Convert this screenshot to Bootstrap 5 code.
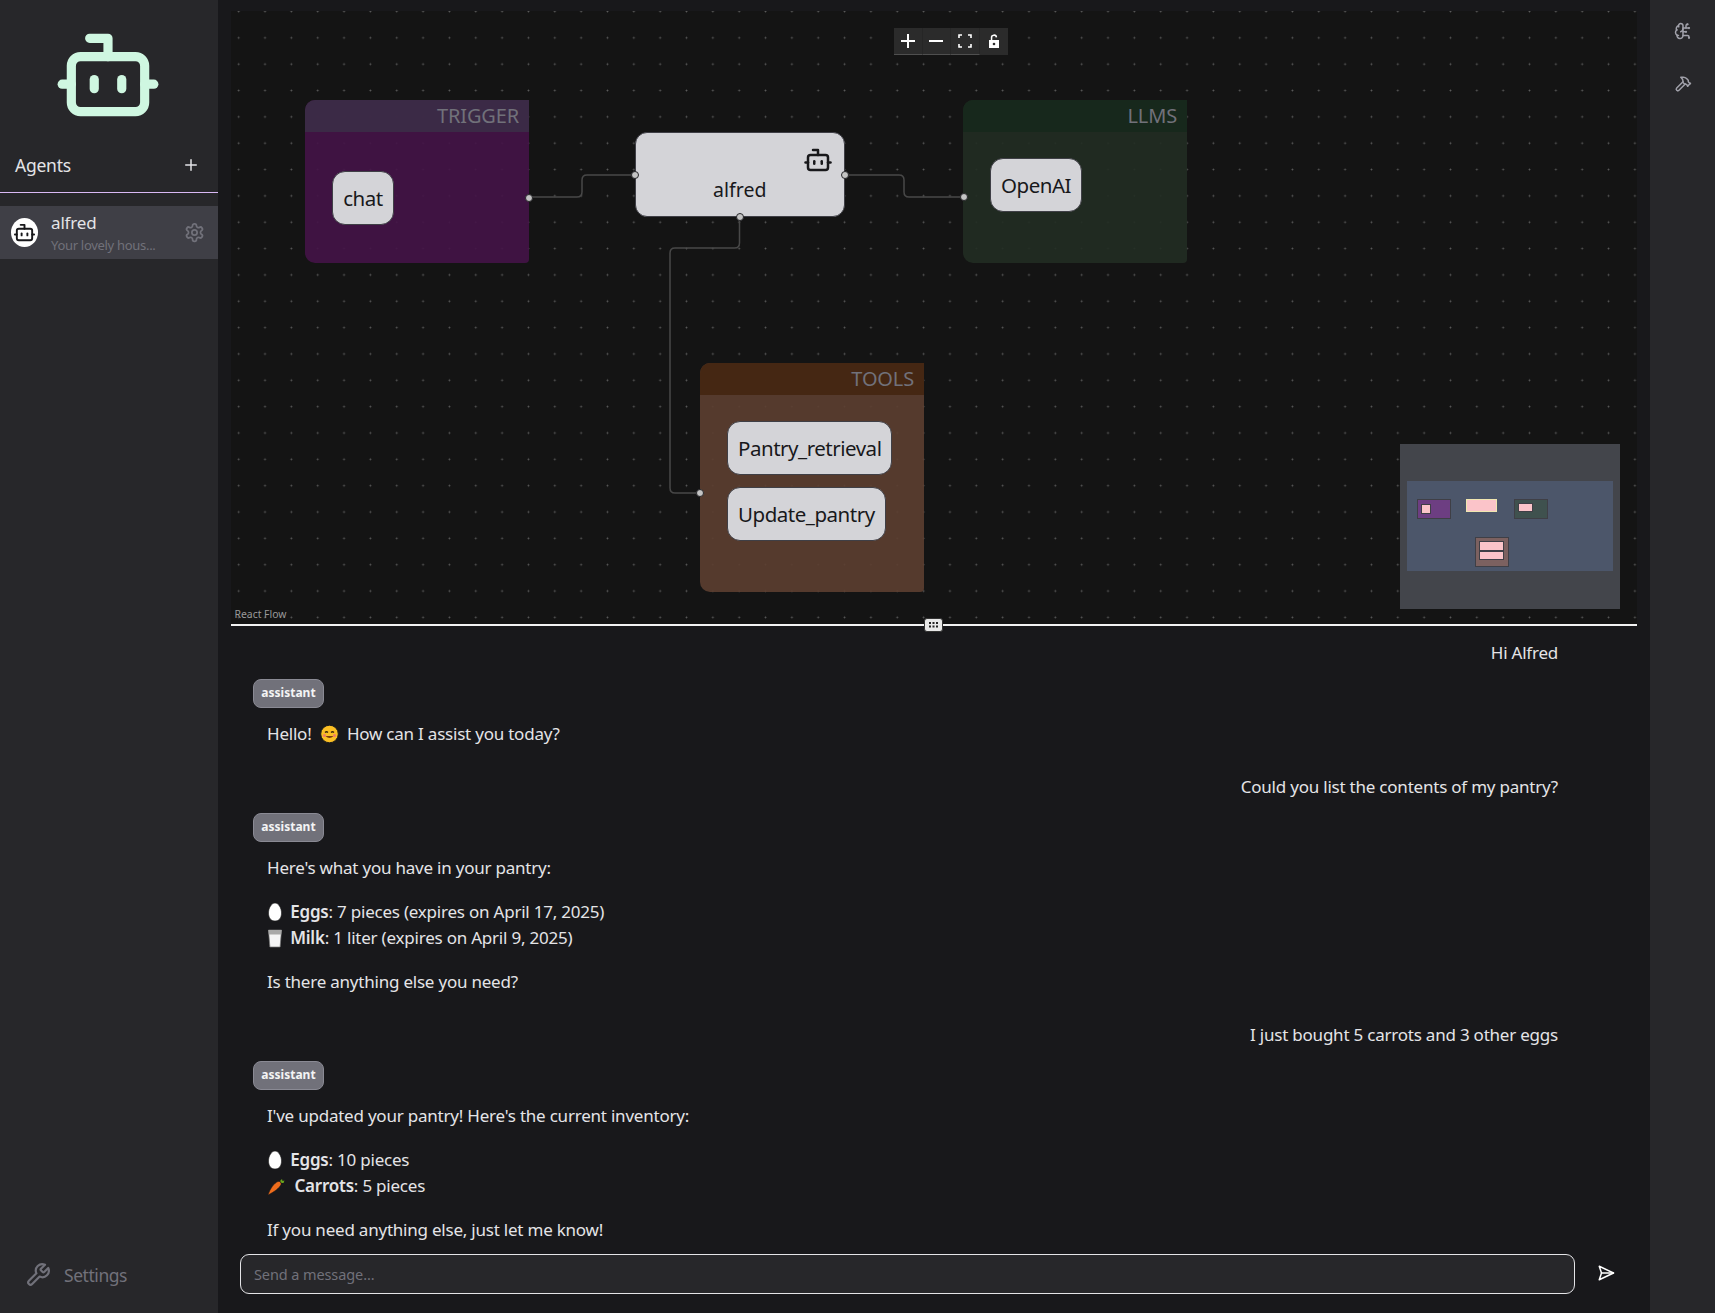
<!DOCTYPE html>
<html lang="en" data-bs-theme="dark">
<head>
<meta charset="utf-8">
<title>Agents</title>
<link href="https://cdn.jsdelivr.net/npm/bootstrap@5.3.0/dist/css/bootstrap.min.css" rel="stylesheet">
<style>
html,body{height:100%;margin:0}
body{background:#18181b;color:#e4e4e7;font-family:"Noto Sans","Open Sans",sans-serif;font-size:17px;line-height:26px;overflow:hidden}
svg.ic{fill:none;stroke:currentColor;stroke-width:2;stroke-linecap:round;stroke-linejoin:round;flex:none;display:block}
.app-shell{height:1313px;width:1715px}
.side-pane{width:218px;background:#27272a;flex:none}
.logo-wrap{height:129px;padding-top:20px;padding-left:53px;color:#cff7e1}
.agents-head{height:64px;padding:23px 18px 0 15px;border-bottom:1px solid #d9b9f5;margin-bottom:13px;font-size:17.5px;letter-spacing:-.25px}
.agent-item{height:53px;background:#3f3f46;padding-left:11px}
.agent-avatar{width:27px;height:29px;border-radius:50%;background:#fff;color:#18181b}
.agent-text{margin-left:13px;line-height:1;padding-top:1px}
.agent-name{font-size:17px;line-height:22px;color:#e4e4e7;letter-spacing:-.15px}
.agent-sub{font-size:13px;line-height:18px;color:#71717a;margin-top:2px;letter-spacing:-.3px}
.gear-ic{color:#71717a;margin-left:auto;margin-right:13px}
.settings-row{padding:0 0 25px 25px;color:#71717a;font-size:17.5px;gap:13px;letter-spacing:-.45px}
.main-pane{min-width:0;padding:11px 13px 0}
.flow-area{height:613px;background-color:#141414;background-image:radial-gradient(circle at center,#5c5c5c .8px,transparent 1.1px);background-size:26.35px 26.35px;background-position:-5.5px -12.7px;position:relative;overflow:hidden;flex:none}
.edge-layer{position:absolute;left:0;top:0;width:1406px;height:613px;fill:none;stroke:#484848;stroke-width:1.5}
.flow-ctrl{position:absolute;left:663px;top:17px;background:#2b2b2b;display:flex}
.ctrl-btn{width:28.5px;height:27px;display:flex;align-items:center;justify-content:center;color:#fff;border-bottom:1px solid #4f4f4f;border-right:1px solid #262626}
.ctrl-btn.last-btn{border-bottom-color:transparent;border-right:0}
.group-box{position:absolute;width:224px;border-radius:10px 0 4px 10px}
.g-trigger{left:74px;top:89px;height:163px;background:rgba(68,19,71,.9)}
.g-llm{left:732px;top:89px;height:163px;background:rgba(33,44,34,.9)}
.g-tools{left:469px;top:352px;height:229px;background:rgba(92,62,48,.9)}
.group-title{height:32px;text-align:right;padding-right:10px;font-size:20px;line-height:32px;color:#71717a;border-radius:10px 0 0 0;letter-spacing:-.15px}
.g-trigger .group-title{background:rgba(60,44,70,.94)}
.g-llm .group-title{background:rgba(22,40,28,.94)}
.g-tools .group-title{background:rgba(68,38,18,.94)}
.group-body{padding-left:27px;gap:12px}
.flow-node{background:#d4d4d8;color:#18181b;border:1px solid #3f3f46;border-radius:13px;height:54px;line-height:52px;padding:0 10px;font-size:20.5px;width:max-content;min-width:62px;text-align:center;letter-spacing:-.48px}
.g-trigger .group-body{padding-top:39px}
.g-llm .group-body{padding-top:26px}
.g-tools .group-body{padding-top:26px}
.agent-node{position:absolute;left:404px;top:121px;width:209.500px;height:85px;background:#d4d4d8;color:#18181b;border:1px solid #3f3f46;border-radius:12px;text-align:center;font-size:19.5px;padding-top:44px;line-height:26px}
.agent-node svg{position:absolute;right:11px;top:12px}
.flow-handle{position:absolute;width:8px;height:8px;border-radius:50%;background:#c4c4c4;border:1px solid #27272a}
.h-a{left:293.500px;top:182.500px}.h-b{left:399.500px;top:160px}.h-c{left:609.500px;top:160px}.h-d{left:504.500px;top:202px}.h-e{left:728.500px;top:182px}.h-f{left:465px;top:478px}
.mini-map{position:absolute;left:1169px;top:433px;width:220px;height:165px;background:#43454b}
.flow-credit{position:absolute;left:3.500px;top:596px;font-size:10.4px;line-height:14px;color:#9a9a9a}
.split-line{height:2px;background:#f2f2f2;position:relative;flex:none}
.split-grip{position:absolute;left:693px;top:-6px;width:19px;height:14px;background:#e8e8e8;border-radius:3px;display:flex;align-items:center;justify-content:center;border:1px solid #333}
.chat-scroll{flex:1;min-height:0;overflow:hidden;padding:14px 79px 0 22px;letter-spacing:-.22px}
.user-msg{text-align:right;margin-bottom:13px}
.role-tag{display:inline-block;height:29px;width:71px;background:#71717a;border:1px solid #8a8a94;border-radius:8px;font-size:12px;font-weight:700;color:#f4f4f5;line-height:25px;text-align:center;vertical-align:top;letter-spacing:0}
.role-wrap{height:29px;margin-bottom:13px}
.msg-body{padding-left:14px}
.msg-body p{margin:0 0 18px}
.msg-body p.last-p{margin-bottom:27px}
.msg-body ul{list-style:none;padding:0;margin:0 0 18px}
.msg-body strong{font-weight:600}
.emo{display:inline-block;vertical-align:-4px;width:19px;height:20px}
.emo-face{margin:0 4px}
.input-row{height:59px;flex:none;padding:0 0 0 9px;margin-top:10px}
.msg-input{height:40px;width:1335px;background:#27272a;border:1px solid #e4e4e7;border-radius:9px;color:#71717a;font-size:14.5px;padding:0 13px;display:flex;align-items:center;letter-spacing:-.1px}
.send-ic{margin-left:22px;color:#fff;margin-top:10px}
.right-pane{width:65px;background:#27272a;flex:none;color:#a1a1aa;padding-top:22px;gap:35px}
</style>
</head>
<body>
<div class="app-shell d-flex">
  <aside class="side-pane d-flex flex-column">
    <div class="logo-wrap">
      <svg class="ic" width="110" height="110" viewBox="0 0 24 24"><path d="M12 8V4H8"/><rect width="16" height="12" x="4" y="8" rx="2"/><path d="M2 14h2"/><path d="M20 14h2"/><path d="M15 13v2"/><path d="M9 13v2"/></svg>
    </div>
    <div class="agents-head d-flex justify-content-between align-items-start">
      <span>Agents</span>
      <svg class="ic mt-1" width="18" height="18" viewBox="0 0 24 24" stroke-width="1.6"><path d="M5 12h14"/><path d="M12 5v14"/></svg>
    </div>
    <div class="agent-item d-flex align-items-center">
      <div class="agent-avatar d-flex align-items-center justify-content-center">
        <svg class="ic" width="23" height="23" viewBox="0 0 24 24"><path d="M12 8V4H8"/><rect width="16" height="12" x="4" y="8" rx="2"/><path d="M2 14h2"/><path d="M20 14h2"/><path d="M15 13v2"/><path d="M9 13v2"/></svg>
      </div>
      <div class="agent-text">
        <div class="agent-name">alfred</div>
        <div class="agent-sub">Your lovely hous...</div>
      </div>
      <svg class="ic gear-ic" width="21" height="21" viewBox="0 0 24 24" stroke-width="1.6"><path d="M12.22 2h-.44a2 2 0 0 0-2 2v.18a2 2 0 0 1-1 1.73l-.43.25a2 2 0 0 1-2 0l-.15-.08a2 2 0 0 0-2.73.73l-.22.38a2 2 0 0 0 .73 2.73l.15.1a2 2 0 0 1 1 1.72v.51a2 2 0 0 1-1 1.74l-.15.09a2 2 0 0 0-.73 2.73l.22.38a2 2 0 0 0 2.73.73l.15-.08a2 2 0 0 1 2 0l.43.25a2 2 0 0 1 1 1.73V20a2 2 0 0 0 2 2h.44a2 2 0 0 0 2-2v-.18a2 2 0 0 1 1-1.73l.43-.25a2 2 0 0 1 2 0l.15.08a2 2 0 0 0 2.73-.73l.22-.39a2 2 0 0 0-.73-2.73l-.15-.08a2 2 0 0 1-1-1.74v-.5a2 2 0 0 1 1-1.74l.15-.09a2 2 0 0 0 .73-2.73l-.22-.38a2 2 0 0 0-2.73-.73l-.15.08a2 2 0 0 1-2 0l-.43-.25a2 2 0 0 1-1-1.73V4a2 2 0 0 0-2-2z"/><circle cx="12" cy="12" r="3"/></svg>
    </div>
    <div class="settings-row d-flex align-items-center mt-auto">
      <svg class="ic" width="26" height="26" viewBox="0 0 24 24"><path d="M14.7 6.3a1 1 0 0 0 0 1.4l1.6 1.6a1 1 0 0 0 1.4 0l3.77-3.77a6 6 0 0 1-7.94 7.94l-6.91 6.91a2.12 2.12 0 0 1-3-3l6.91-6.91a6 6 0 0 1 7.94-7.94l-3.76 3.76z"/></svg>
      <span>Settings</span>
    </div>
  </aside>

  <main class="main-pane flex-grow-1 d-flex flex-column">
    <section class="flow-area">
      <svg class="edge-layer" viewBox="0 0 1406 613">
        <path d="M298 186H346Q351 186 351 181V169Q351 164 356 164H404"/>
        <path d="M613 164H668Q673 164 673 169V181Q673 186 678 186H733"/>
        <path d="M508.500 206V232Q508.500 237 503.500 237H444Q439 237 439 242V477Q439 482 444 482H469"/>
      </svg>
      <div class="flow-ctrl">
        <div class="ctrl-btn"><svg width="14" height="14" viewBox="0 0 14 14" fill="#fff"><path d="M6 0h2v6h6v2H8v6H6V8H0V6h6z"/></svg></div>
        <div class="ctrl-btn"><svg width="14" height="14" viewBox="0 0 14 14" fill="#fff"><path d="M0 6h14v2H0z"/></svg></div>
        <div class="ctrl-btn"><svg width="14" height="14" viewBox="0 0 14 14" fill="none" stroke="#fff" stroke-width="1.6"><path d="M1 4V1h3M10 1h3v3M13 10v3h-3M4 13H1v-3"/></svg></div>
        <div class="ctrl-btn last-btn"><svg width="12" height="14" viewBox="0 0 12 14" fill="#fff"><path d="M1 6h10v8H1zM2.800 6V4a3.200 3.200 0 0 1 6.400-.8l-1.500.3A1.700 1.700 0 0 0 4.300 4v2z"/><circle cx="6" cy="10" r="1.300" fill="#2b2b2b"/></svg></div>
      </div>

      <div class="group-box g-trigger">
        <div class="group-title">TRIGGER</div>
        <div class="group-body d-flex flex-column"><div class="flow-node">chat</div></div>
      </div>
      <div class="group-box g-llm">
        <div class="group-title">LLMS</div>
        <div class="group-body d-flex flex-column"><div class="flow-node">OpenAI</div></div>
      </div>
      <div class="group-box g-tools">
        <div class="group-title">TOOLS</div>
        <div class="group-body d-flex flex-column">
          <div class="flow-node">Pantry_retrieval</div>
          <div class="flow-node">Update_pantry</div>
        </div>
      </div>
      <div class="agent-node">
        <svg class="ic" width="30" height="30" viewBox="0 0 24 24"><path d="M12 8V4H8"/><rect width="16" height="12" x="4" y="8" rx="2"/><path d="M2 14h2"/><path d="M20 14h2"/><path d="M15 13v2"/><path d="M9 13v2"/></svg>
        alfred
      </div>
      <span class="flow-handle h-a"></span><span class="flow-handle h-b"></span><span class="flow-handle h-c"></span><span class="flow-handle h-d"></span><span class="flow-handle h-e"></span><span class="flow-handle h-f"></span>

      <svg class="mini-map" viewBox="0 0 220 165">
        <rect x="7" y="37" width="206" height="90" fill="#4c566a"/>
        <g stroke="#3f3f46" stroke-width="1">
          <rect x="17.500" y="55.500" width="33" height="19" fill="#6d3e82"/>
          <rect x="21.500" y="60.500" width="9" height="9" fill="#fbc4c9"/>
          <rect x="114.500" y="55.500" width="33" height="19" fill="#3f514e"/>
          <rect x="118.500" y="59.500" width="14" height="8" fill="#fbc4c9"/>
          <rect x="75.500" y="93.500" width="33" height="29" fill="#7c6160"/>
          <rect x="79.500" y="97.500" width="24" height="9" fill="#fbc4c9"/>
          <rect x="79.500" y="107.500" width="24" height="8" fill="#fbc4c9"/>
        </g>
        <rect x="66.500" y="55.500" width="30" height="12" fill="#fbc4c9" stroke="#f0e6b0"/>
      </svg>
      <div class="flow-credit">React Flow</div>
    </section>
    <div class="split-line">
      <div class="split-grip"><svg width="9" height="7" viewBox="0 0 9 7" fill="#222"><path d="M0 0h2v2H0zM3.500 0h2v2h-2zM7 0h2v2H7zM0 3.500h2v2H0zM3.500 3.500h2v2h-2zM7 3.500h2v2H7z"/></svg></div>
    </div>
    <div class="chat-scroll">
      <div class="user-msg">Hi Alfred</div>
      <div class="role-wrap"><span class="role-tag">assistant</span></div>
      <div class="msg-body">
        <p class="last-p">Hello! <svg class="emo emo-face" viewBox="0 0 19 20"><circle cx="9.500" cy="10" r="8.800" fill="#fbbf24" stroke="#1a1a1a"/><path d="M5 8.500q1.500-1.500 3 0M11 8.500q1.500-1.500 3 0" fill="none" stroke="#3a2410" stroke-width="1.200"/><path d="M5.500 12q4 4 8 0z" fill="#7a3b10"/><circle cx="4.500" cy="11.500" r="1.500" fill="#f27a6a"/><circle cx="14.500" cy="11.500" r="1.500" fill="#f27a6a"/></svg> How can I assist you today?</p>
      </div>
      <div class="user-msg">Could you list the contents of my pantry?</div>
      <div class="role-wrap"><span class="role-tag">assistant</span></div>
      <div class="msg-body">
        <p>Here's what you have in your pantry:</p>
        <ul>
          <li><svg class="emo" viewBox="0 0 19 20"><path d="M8 1c3.500 0 6.500 5 6.500 10S12 19 8 19s-6.500-3-6.500-8S4.500 1 8 1z" fill="#fff" stroke="#1a1a1a" stroke-width=".6"/></svg> <strong>Eggs</strong>: 7 pieces (expires on April 17, 2025)</li>
          <li><svg class="emo" viewBox="0 0 19 20"><path d="M1.500 2h13l-1.400 17H2.900z" fill="#f4f4f5" stroke="#777" stroke-width=".7"/><path d="M1.500 2h13l-.4 4.500H1.900z" fill="#a8a8a8"/></svg> <strong>Milk</strong>: 1 liter (expires on April 9, 2025)</li>
        </ul>
        <p class="last-p">Is there anything else you need?</p>
      </div>
      <div class="user-msg">I just bought 5 carrots and 3 other eggs</div>
      <div class="role-wrap"><span class="role-tag">assistant</span></div>
      <div class="msg-body">
        <p>I've updated your pantry! Here's the current inventory:</p>
        <ul>
          <li><svg class="emo" viewBox="0 0 19 20"><path d="M8 1c3.500 0 6.500 5 6.500 10S12 19 8 19s-6.500-3-6.500-8S4.500 1 8 1z" fill="#fff" stroke="#1a1a1a" stroke-width=".6"/></svg> <strong>Eggs</strong>: 10 pieces</li>
          <li><svg class="emo" viewBox="0 0 19 20"><path d="M13 5 15 3l.5 2 2-.5-1 2.500-2 0z" fill="#6aa51c"/><path d="M1 19C3 13 7 7 11 5.500c2-.5 3.500 1 3 3C12.500 12 7 16 1 19z" fill="#ee6c1c" stroke="#1a1a1a" stroke-width=".5"/></svg> &nbsp;<strong>Carrots</strong>: 5 pieces</li>
        </ul>
        <p class="mb-0">If you need anything else, just let me know!</p>
      </div>
    </div>
    <div class="input-row d-flex align-items-start">
      <div class="msg-input">Send a message...</div>
      <svg class="ic send-ic" width="18" height="18" viewBox="0 0 24 24"><path d="m3 3 3 9-3 9 19-9Z"/><path d="M6 12h16"/></svg>
    </div>
  </main>

  <aside class="right-pane d-flex flex-column align-items-center">
    <svg class="ic" width="18" height="18" viewBox="0 0 24 24"><path d="M12 5a3 3 0 1 0-5.997.125 4 4 0 0 0-2.526 5.77 4 4 0 0 0 .556 6.588A4 4 0 1 0 12 18Z"/><path d="M9 13a4.500 4.500 0 0 0 3-4"/><path d="M6.003 5.125A3 3 0 0 0 6.401 6.500"/><path d="M3.477 10.896a4 4 0 0 1 .585-.396"/><path d="M6 18a4 4 0 0 1-1.967-.516"/><path d="M12 13h4"/><path d="M12 18h6a2 2 0 0 1 2 2v1"/><path d="M12 8h8"/><path d="M16 8V5a2 2 0 0 1 2-2"/><circle cx="16" cy="13" r=".5"/><circle cx="18" cy="3" r=".5"/><circle cx="20" cy="21" r=".5"/><circle cx="20" cy="8" r=".5"/></svg>
    <svg class="ic" width="18" height="18" viewBox="0 0 24 24"><path d="m15 12-8.373 8.373a1 1 0 1 1-3-3L12 9"/><path d="m18 15 4-4"/><path d="m21.500 11.500-1.914-1.914A2 2 0 0 1 19 8.172V7l-2.260-2.260a6 6 0 0 0-4.202-1.756L9 2.960l.92.820A6.180 6.180 0 0 1 12 8.400V10l2 2h1.172a2 2 0 0 1 1.414.586L18.500 14.500"/></svg>
  </aside>
</div>
<script src="https://cdn.jsdelivr.net/npm/bootstrap@5.3.0/dist/js/bootstrap.bundle.min.js"></script>
</body>
</html>
